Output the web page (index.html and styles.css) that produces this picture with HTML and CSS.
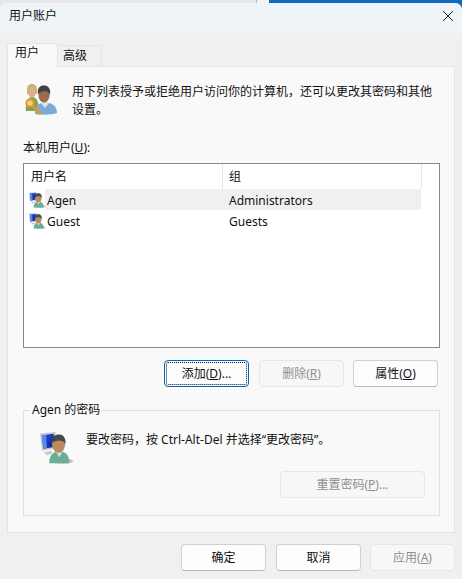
FILE: index.html
```html
<!DOCTYPE html>
<html lang="zh-CN">
<head>
    <meta charset="UTF-8">
    <meta name="viewport" content="width=device-width, initial-scale=1.0">
    <title>用户账户</title>
    <link rel="stylesheet" href="styles.css">
</head>
<body>
    <div class="backdrop">
        <div class="backdrop-gray"></div>
        <div class="backdrop-blue"></div>
    </div>

    <div class="window">
        <div class="titlebar">
            <span class="title">用户账户</span>
            <svg class="close" width="12" height="12" viewBox="0 0 12 12">
                <path d="M1 1 L11 11 M11 1 L1 11" stroke="#222" stroke-width="1" fill="none"/>
            </svg>
        </div>

        <div class="content">
            <div class="tabs">
                <div class="tab active">用户</div>
                <div class="tab">高级</div>
            </div>

            <div class="panel">
                <div class="intro">
                    <svg class="users-icon" width="34" height="32" viewBox="0 0 34 32">
                        <defs>
                            <filter id="soft"><feGaussianBlur stdDeviation="0.4"/></filter>
                        </defs>
                        <g filter="url(#soft)">
                            <path d="M2 28 C1 19 4 14 8 14 C12 14 15 17 15 28 Z" fill="#7da35e"/>
                            <path d="M3 11 C2 3 5 1 8 1 C11 1 14 3 13 11 Z" fill="#c6b07c"/>
                            <ellipse cx="8" cy="9" rx="4" ry="5.5" fill="#dcae88"/>
                            <path d="M11 31 C11 23 15 19.5 21 19.5 C28 19.5 33 23 33 30 C28 32 16 32 11 31 Z" fill="#7cabd6"/>
                            <path d="M17 20 L21 25 L25 20 Z" fill="#d8e6f2"/>
                            <ellipse cx="20" cy="12" rx="5.6" ry="7.5" fill="#9a6a4a"/>
                            <path d="M14 11 C13 4 17 2.5 20 2.5 C24 2.5 27 5 26 12 C25 7 18 7 14 11 Z" fill="#3c3f45"/>
                            <circle cx="6" cy="20" r="3.6" fill="#f3d27a" stroke="#e39a22" stroke-width="2"/>
                            <path d="M8.5 22.5 L17 31 M13 27 L11.5 28.5 M15.5 29.5 L14 31" stroke="#e39a22" stroke-width="2" fill="none"/>
                        </g>
                    </svg>
                    <p class="intro-text">用下列表授予或拒绝用户访问你的计算机，还可以更改其密码和其他设置。</p>
                </div>

                <div class="list-label">本机用户(<u>U</u>):</div>

                <div class="listview">
                    <div class="list-head">
                        <div class="col-name">用户名</div>
                        <div class="col-group">组</div>
                    </div>
                    <div class="list-row selected">
                        <svg class="row-icon" width="17" height="16" viewBox="0 0 17 16">
                            <use href="#user-pc"/>
                        </svg>
                        <div class="row-name">Agen</div>
                        <div class="row-group">Administrators</div>
                    </div>
                    <div class="list-row">
                        <svg class="row-icon" width="17" height="16" viewBox="0 0 17 16">
                            <use href="#user-pc"/>
                        </svg>
                        <div class="row-name">Guest</div>
                        <div class="row-group">Guests</div>
                    </div>
                </div>

                <div class="list-actions">
                    <button class="btn focused"><span class="focus-ring">添加(<u>D</u>)...</span></button>
                    <button class="btn" disabled>删除(<u>R</u>)</button>
                    <button class="btn">属性(<u>O</u>)</button>
                </div>

                <div class="groupbox">
                    <div class="legend">Agen 的密码</div>
                    <div class="password-info">
                        <svg class="pc-icon" width="34" height="32" viewBox="0 0 17 16">
                            <use href="#user-pc"/>
                        </svg>
                        <p class="password-text">要改密码，按 Ctrl-Alt-Del 并选择“更改密码”。</p>
                    </div>
                    <div class="reset-row">
                        <button class="btn reset" disabled>重置密码(<u>P</u>)...</button>
                    </div>
                </div>
            </div>

            <div class="footer">
                <button class="btn">确定</button>
                <button class="btn">取消</button>
                <button class="btn" disabled>应用(<u>A</u>)</button>
            </div>
        </div>
    </div>

    <!-- shared monitor + user icon -->
    <svg class="icon-defs" width="0" height="0">
        <defs>
            <linearGradient id="screen" x1="0" y1="0" x2="1" y2="1">
                <stop offset="0" stop-color="#2a55e0"/>
                <stop offset="1" stop-color="#0c1f8c"/>
            </linearGradient>
            <filter id="soft-small"><feGaussianBlur stdDeviation="0.15"/></filter>
            <symbol id="user-pc" viewBox="0 0 17 16" overflow="visible">
                <g filter="url(#soft-small)">
                    <path d="M0 0.8 L7.8 0 L7.8 8.2 L1 9.4 Z" fill="#c4c9d0"/>
                    <path d="M0.9 1.6 L6.9 0.9 L6.9 7.5 L1.7 8.4 Z" fill="url(#screen)"/>
                    <path d="M0.9 1.6 L3 1.4 L3.5 8.1 L1.7 8.4 Z" fill="#5f86ea"/>
                    <path d="M2 10 L6 9.4 L6 11 L3 11.6 Z" fill="#c8cbd0"/>
                    <ellipse cx="11" cy="14.6" rx="5.6" ry="1.3" fill="#c4c4c4"/>
                    <path d="M4.6 15.6 C4.6 11.4 7 9.6 9.6 9.6 C12.6 9.6 14.6 11.4 14.8 15.6 Z" fill="#6cae92"/>
                    <path d="M7.9 9.8 L9.6 12.6 L11.3 9.8 Z" fill="#cfe6dc"/>
                    <ellipse cx="9.3" cy="6" rx="3.3" ry="4.4" fill="#b98a63"/>
                    <path d="M5.8 5.6 C5.6 2 7.8 1.2 9.5 1.2 C11.6 1.2 13 2.8 12.8 6 C12 3.8 8 3.6 5.8 5.6 Z" fill="#45484c"/>
                </g>
            </symbol>
        </defs>
    </svg>
</body>
</html>
```

FILE: styles.css
```css
* {
    box-sizing: border-box;
}

html, body {
    margin: 0;
    padding: 0;
    height: 100%;
}

body {
    position: relative;
    width: 462px;
    height: 579px;
    overflow: hidden;
    background-color: #f0f0f0;
    color: #111;
    font-family: "Noto Sans", "Noto Sans CJK SC", sans-serif;
    font-size: 12px;
    line-height: 16px;
}

.backdrop {
    position: absolute;
    top: 0;
    left: 0;
    width: 100%;
    height: 12px;
    background-color: #e8e8e8;
}

.backdrop-gray {
    position: absolute;
    top: 0;
    left: 0;
    width: 269px;
    height: 12px;
    background: linear-gradient(to right, #e8e8e8 256px, #b8b8b8 256px, #b8b8b8 257px, #f2f2f2 257px);
}

.backdrop-blue {
    position: absolute;
    top: 0;
    left: 269px;
    right: 0;
    height: 12px;
    background-color: #0f6cbd;
}

.window {
    position: relative;
    display: flex;
    flex-direction: column;
    height: 576px;
    margin-top: 3px;
    border-radius: 7px 7px 0 0;
    background-color: #f0f0f0;
    overflow: hidden;
}

.titlebar {
    display: flex;
    align-items: center;
    justify-content: space-between;
    height: 30px;
    padding: 0 8px 4px 9px;
    background-color: #eff4f9;
}

.close {
    display: block;
}

.content {
    flex: 1;
    display: flex;
    flex-direction: column;
    padding: 10px 7px 8px 7px;
}

.tabs {
    display: flex;
    align-items: flex-end;
    height: 23px;
    position: relative;
    z-index: 1;
}

.tab {
    width: 44px;
    height: 21px;
    padding: 2px 0 0 5px;
    background-color: #f0f0f0;
    border: 1px solid #e4e4e4;
    border-left: 0;
    border-bottom: 0;
}

.tab.active {
    width: 51px;
    height: 24px;
    margin-bottom: -1px;
    padding: 1px 0 0 7px;
    background-color: #f9f9f9;
    border-left: 1px solid #e4e4e4;
    border-radius: 2px 2px 0 0;
}

.panel {
    display: flex;
    flex-direction: column;
    height: 467px;
    padding: 0 13px 0 15px;
    background-color: #f9f9f9;
    border: 1px solid #e4e4e4;
}

.intro {
    display: flex;
    gap: 15px;
    height: 47px;
    padding-top: 14px;
    padding-left: 1px;
}

.users-icon {
    flex-shrink: 0;
    margin-top: 2px;
    margin-right: -1px;
}

.intro-text {
    margin: 2px 0 0;
    width: 362px;
    line-height: 18px;
}

.list-label {
    margin-top: 26px;
    height: 17px;
}

.listview {
    width: 417px;
    height: 185px;
    margin-top: 6px;
    background-color: #fff;
    border: 1px solid #828790;
}

.list-head {
    display: flex;
    height: 25px;
    line-height: 26px;
}

.col-name {
    width: 199px;
    padding-left: 7px;
    border-right: 1px solid #e5e5e5;
}

.col-group {
    width: 199px;
    padding-left: 6px;
    border-right: 1px solid #e5e5e5;
}

.list-row {
    display: flex;
    align-items: center;
    width: 397px;
    height: 21px;
}

.row-icon {
    flex-shrink: 0;
    margin: 0 0 0 5px;
}

.row-name {
    width: 176px;
    padding: 2px 0 0 1px;
}

.row-group {
    flex: 1;
    padding: 2px 0 0 7px;
}

.list-row.selected {
    background: linear-gradient(to right, #fff 21px, #f0f0f0 21px);
}

.list-actions {
    display: flex;
    justify-content: flex-end;
    gap: 9px;
    margin-top: 12px;
    padding-right: 1px;
    width: 416px;
}

.btn {
    width: 85px;
    height: 27px;
    padding: 0 0 2px;
    font-family: inherit;
    font-size: 12px;
    color: #111;
    background-color: #fdfdfd;
    border: 1px solid #d0d0d0;
    border-bottom-color: #b8b8b8;
    border-radius: 4px;
}

.btn:disabled {
    color: #8f8f8f;
    background-color: #f7f7f7;
    border-color: #e6e6e6;
}

.btn.focused {
    width: 85px;
    margin-right: 1px;
    padding: 1px;
    border-color: #0067c0;
    background-color: #fdfdfd;
}

.focus-ring {
    display: flex;
    align-items: center;
    justify-content: center;
    height: 100%;
    padding-bottom: 1px;
    border: 1px dotted #111;
    border-radius: 2px;
    white-space: pre;
}

.groupbox {
    position: relative;
    width: 417px;
    height: 106px;
    margin-top: 23px;
    border: 1px solid #dfdfdf;
}

.legend {
    position: absolute;
    top: -9px;
    left: 6px;
    padding: 0 2px;
    background-color: #f9f9f9;
}

.password-info {
    display: flex;
    gap: 12px;
    padding: 21px 0 0 16px;
    height: 60px;
}

.pc-icon {
    flex-shrink: 0;
}

.password-text {
    margin: 0;
}

.reset-row {
    display: flex;
    justify-content: flex-end;
    padding-right: 14px;
}

.btn.reset {
    width: 145px;
}

.footer {
    display: flex;
    justify-content: flex-end;
    gap: 9px;
    margin-top: 11px;
}

.footer .btn:first-child {
    margin-right: 1px;
}

.icon-defs {
    position: absolute;
}
```
